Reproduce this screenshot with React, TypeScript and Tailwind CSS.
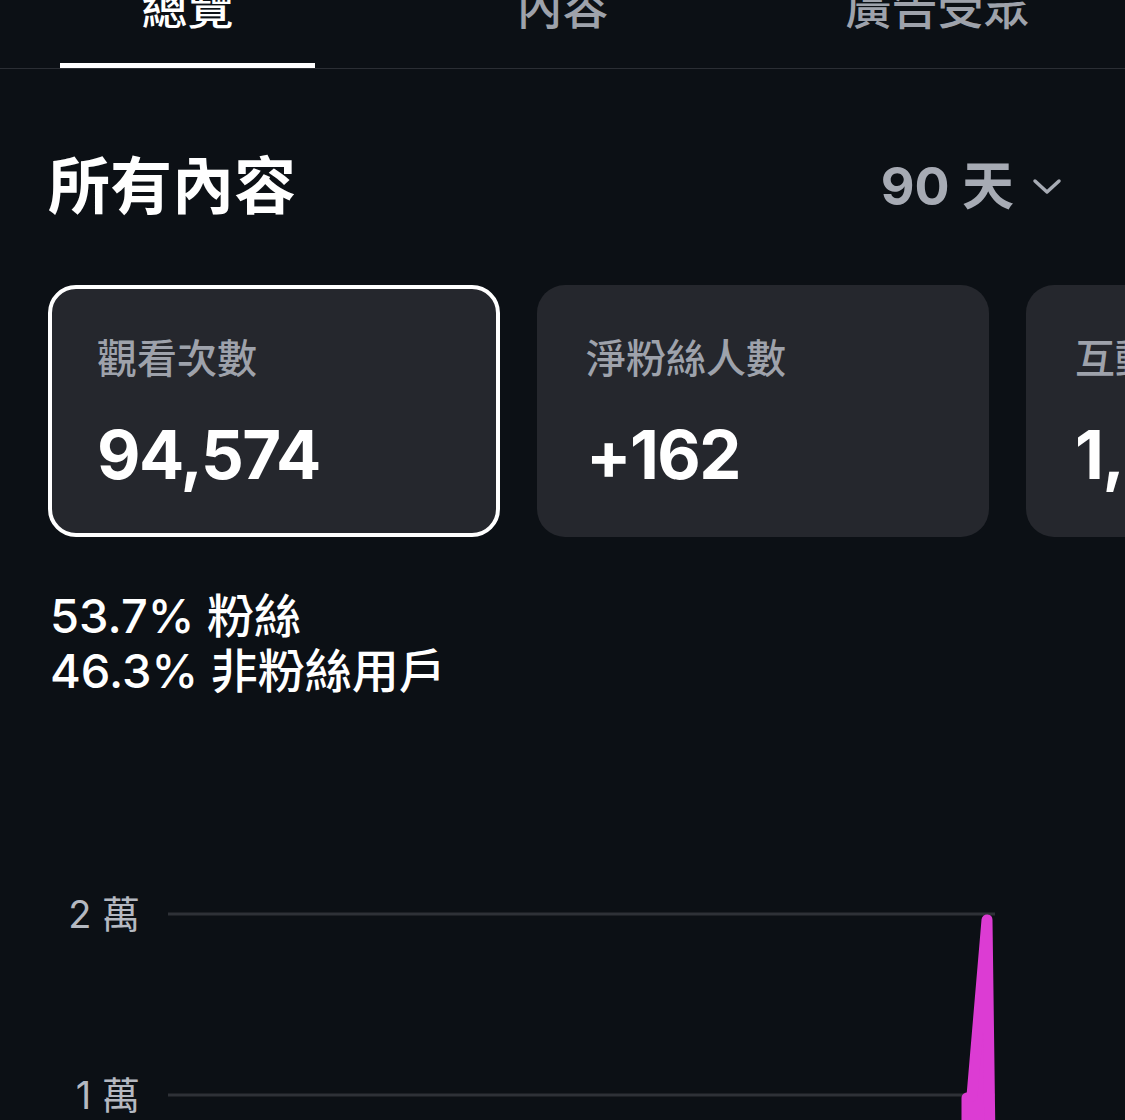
import React from "react";

const font = { fontFamily: 'Inter, "Noto Sans CJK TC", "Noto Sans CJK SC", sans-serif' };

function Tab({ label, active }: { label: string; active?: boolean }) {
  return (
    <div className="flex flex-col justify-between items-center h-full">
      <div
        className={`mt-[-16px] text-[46px] leading-[46px] font-medium ${active ? "text-white" : "text-[#9ea2ab]"}`}
      >
        {label}
      </div>
      <div className={`h-[5px] w-[255px] ${active ? "bg-white" : "bg-transparent"}`} />
    </div>
  );
}

function Card({ label, value, active }: { label: string; value: string; active?: boolean }) {
  return (
    <div
      className={`flex-none w-[452px] h-[252px] rounded-[28px] bg-[#25272d] border-[4px] ${
        active ? "border-white" : "border-transparent"
      } pl-[45px] pt-[50px] flex flex-col`}
    >
      <div className="text-[40px] leading-[40px] text-[#9ea2ab] font-medium whitespace-nowrap">{label}</div>
      <div className="mt-[42px] text-[67px] leading-[68px] font-bold tracking-[-1.5px] text-white whitespace-nowrap">{value}</div>
    </div>
  );
}

export default function App() {
  return (
    <div className="w-[1125px] h-[1120px] bg-[#0c1015] overflow-hidden" style={font}>
      <div className="h-[69px] border-b border-[#2b2e34] grid grid-cols-3">
        <Tab label="總覽" active />
        <Tab label="內容" />
        <Tab label="廣告受眾" />
      </div>

      <div className="mt-[87px] pl-[48px] pr-[63px] flex items-center justify-between">
        <div className="text-[62px] leading-[62px] font-bold text-white">所有內容</div>
        <div className="flex items-center gap-[18px] text-[#a7abb4]">
          <span className="text-[52px] leading-[52px] font-bold">90 天</span>
          <svg width="30" height="18" viewBox="0 0 30 18" fill="none">
            <path d="M3 3 L15 14 L27 3" stroke="#a7abb4" strokeWidth="3.5" strokeLinecap="round" strokeLinejoin="round" />
          </svg>
        </div>
      </div>

      <div className="mt-[67px] pl-[48px] flex gap-[37px]">
        <Card label="觀看次數" value="94,574" active />
        <Card label="淨粉絲人數" value="+162" />
        <Card label="互動次數" value="1,204" />
      </div>

      <div className="mt-[51px] pl-[50px] text-[47px] leading-[55px] text-white font-medium">
        <div>53.7% 粉絲</div>
        <div>46.3% 非粉絲用戶</div>
      </div>

      <div className="relative mt-[182px] h-[240px]">
        <svg className="absolute left-0 top-0" width="1125" height="240" viewBox="0 0 1125 240">
          <line x1="168" y1="34" x2="995" y2="34" stroke="#2e3137" strokeWidth="3" />
          <line x1="168" y1="215" x2="995" y2="215" stroke="#2e3137" strokeWidth="3" />
          <path
            d="M 967 262 L 967 218 L 972 216 L 987 40 L 990 262 Z"
            stroke="#dc3cd3"
            strokeWidth="11"
            fill="#dc3cd3"
            strokeLinecap="round"
            strokeLinejoin="round"
          />
        </svg>
        <div className="absolute right-[985px] top-[13px] text-[38px] leading-[42px] text-[#b5b9c1] whitespace-nowrap">2 萬</div>
        <div className="absolute right-[985px] top-[194px] text-[38px] leading-[42px] text-[#b5b9c1] whitespace-nowrap">1 萬</div>
      </div>
    </div>
  );
}
